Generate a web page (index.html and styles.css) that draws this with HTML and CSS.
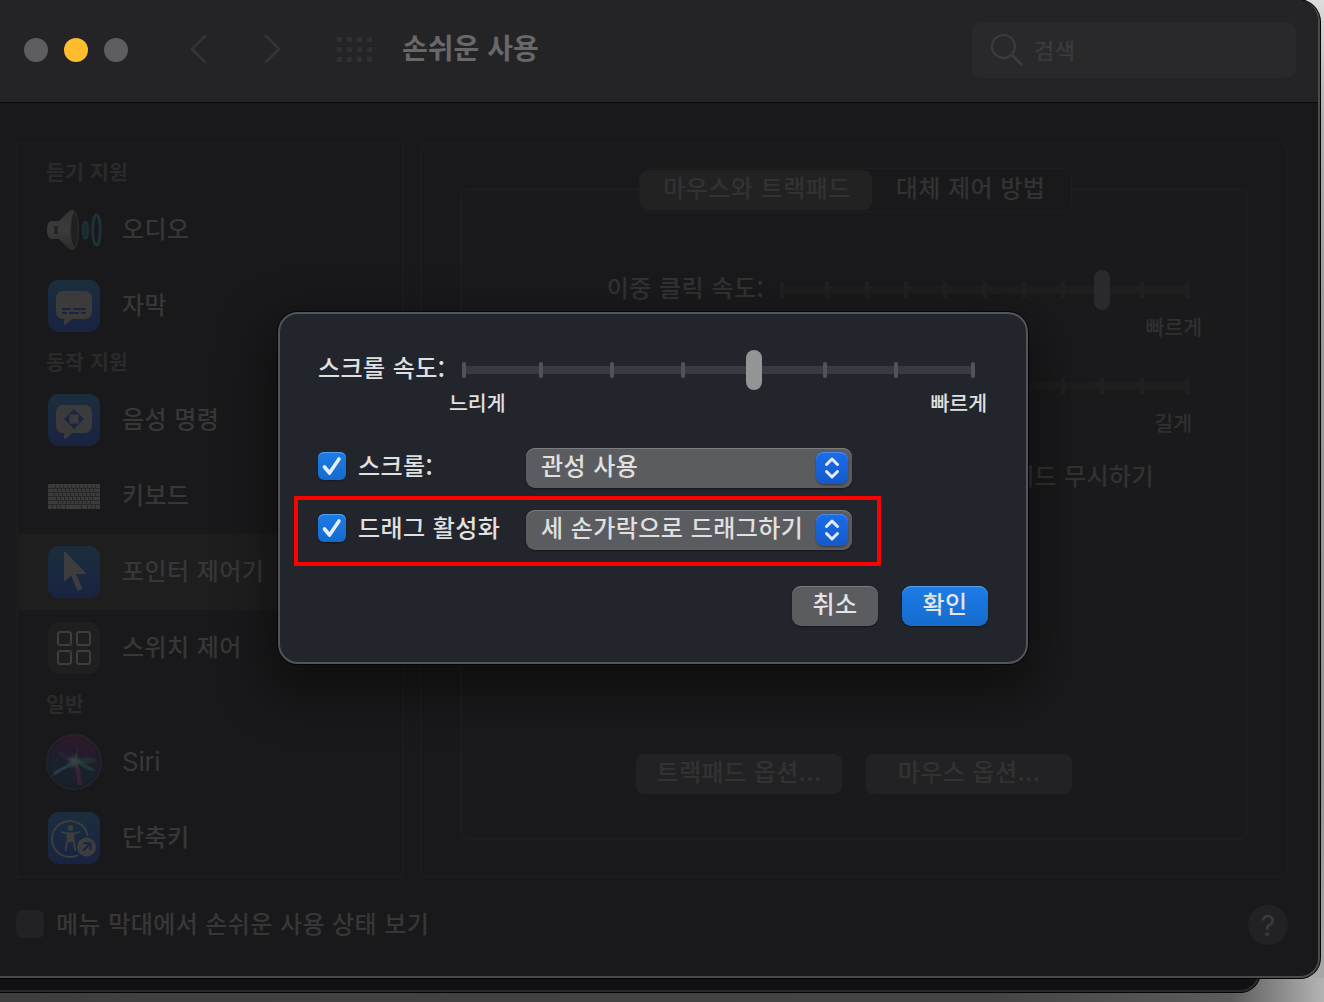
FILE: index.html
```html
<!DOCTYPE html>
<html lang="ko">
<head>
<meta charset="utf-8">
<title>손쉬운 사용</title>
<link rel="stylesheet" href="styles.css">
</head>
<body>
<div class="desktop">
  <div class="back-window"></div>
  <main class="window">
    <header class="titlebar">
      <div class="lights"><i class="light"></i><i class="light light-min"></i><i class="light"></i></div>
      <svg class="nav nav-back" width="18" height="30" viewBox="0 0 18 30"><path d="M16 2 3 15l13 13"/></svg>
      <svg class="nav nav-next" width="18" height="30" viewBox="0 0 18 30"><path d="m2 2 13 13L2 28"/></svg>
      <div class="all-grid"><i></i><i></i><i></i><i></i><i></i><i></i><i></i><i></i><i></i><i></i><i></i><i></i></div>
      <h1 class="title">손쉬운 사용</h1>
      <div class="search">
        <svg width="34" height="34" viewBox="0 0 34 34"><circle cx="14.5" cy="13.5" r="11.5"/><path d="m23 22 9 9" class="handle"/></svg>
        <span>검색</span>
      </div>
    </header>

    <div class="content">
      <nav class="sidebar">
        <h2 class="group">듣기 지원</h2>
        <div class="item">
          <svg class="icon" viewBox="0 0 56 56">
            <defs>
              <linearGradient id="metal" x1="0" y1="0" x2="0" y2="1"><stop offset="0" stop-color="#333334"/><stop offset=".5" stop-color="#3c3c3d"/><stop offset="1" stop-color="#2b2b2c"/></linearGradient>
              <linearGradient id="blue" x1="0" y1="0" x2="0" y2="1"><stop offset="0" stop-color="#1b2e3d"/><stop offset="1" stop-color="#192342"/></linearGradient>
            </defs>
            <path d="M5 19h8L23 9q5-3 7 3 3 16 0 32-2 6-7 3L13 37H5q-4-1-4-9t4-9z" fill="url(#metal)"/>
            <path d="M8 24h4v8H8z" fill="#242425"/>
            <ellipse cx="28.500" cy="28" rx="3.800" ry="17.500" fill="#202021" stroke="#303031"/>
            <ellipse cx="39.500" cy="28" rx="2.700" ry="8.500" fill="#1c2a30" stroke="#1d3038" stroke-width="2"/>
            <ellipse cx="50.500" cy="28" rx="3.800" ry="15" fill="none" stroke="#1e323a" stroke-width="3"/>
          </svg>
          <span>오디오</span>
        </div>
        <div class="item">
          <svg class="icon" viewBox="0 0 56 56">
            <rect x="2" y="2" width="52" height="52" rx="11" fill="url(#blue)"/>
            <path d="M17 13h22a7 7 0 0 1 7 7v14a7 7 0 0 1-7 7H26l-6 5.500q-2 1.200-2-1V41h-1a7 7 0 0 1-7-7V20a7 7 0 0 1 7-7z" fill="#3b3b3c"/>
            <path d="M16 31h9M27 31h13M16 35h5M23 35h10M35 35h5" stroke="#1a2640" stroke-width="2"/>
          </svg>
          <span>자막</span>
        </div>
        <h2 class="group">동작 지원</h2>
        <div class="item">
          <svg class="icon" viewBox="0 0 56 56">
            <rect x="2" y="2" width="52" height="52" rx="11" fill="url(#blue)"/>
            <path d="M17 13h22a7 7 0 0 1 7 7v14a7 7 0 0 1-7 7H26l-6 5.500q-2 1.200-2-1V41h-1a7 7 0 0 1-7-7V20a7 7 0 0 1 7-7z" fill="#3b3b3c"/>
            <path d="m28 17.500 4.500 4.500h-9zM28 36.500l4.500-4.500h-9zM18.500 27l4.500-4.500v9zM37.500 27 33 22.500v9z" fill="#1a2640" stroke="#1a2640" stroke-linejoin="round" stroke-width=".8"/>
          </svg>
          <span>음성 명령</span>
        </div>
        <div class="item">
          <svg class="icon" viewBox="0 0 56 56">
            <rect x="2" y="16" width="52" height="25" rx="1" fill="#3b3b3c"/>
            <g stroke="#282829" stroke-width="1" fill="none">
              <path d="M2 20.500h52M2 24.500h52M2 28.500h52M2 32.500h52M2 36.500h52"/>
              <path d="M9.500 17v3.500M13.500 17v3.500M17.500 17v3.500M21.500 17v3.500M25.500 17v3.500M29.500 17v3.500M33.500 17v3.500M37.500 17v3.500M41.500 17v3.500M45.500 17v3.500M49.500 17v3.500"/>
              <path d="M7.500 21v3.500M11.500 21v3.500M15.500 21v3.500M19.500 21v3.500M23.500 21v3.500M27.500 21v3.500M31.500 21v3.500M35.500 21v3.500M39.500 21v3.500M43.500 21v3.500M47.500 21v3.500"/>
              <path d="M8.500 25v3.500M12.500 25v3.500M16.500 25v3.500M20.500 25v3.500M24.500 25v3.500M28.500 25v3.500M32.500 25v3.500M36.500 25v3.500M40.500 25v3.500M44.500 25v3.500M49.500 25v3.500"/>
              <path d="M10.500 29v3.500M14.500 29v3.500M18.500 29v3.500M22.500 29v3.500M26.500 29v3.500M30.500 29v3.500M34.500 29v3.500M38.500 29v3.500M42.500 29v3.500M46.500 29v3.500"/>
              <path d="M12.500 33v3.500M16.500 33v3.500M20.500 33v3.500M24.500 33v3.500M28.500 33v3.500M32.500 33v3.500M36.500 33v3.500M40.500 33v3.500M44.500 33v3.500"/>
              <path d="M6.500 37v4M10.500 37v4M14.500 37v4M19.500 37v4M35.500 37v4M41.500 37v4M45.500 37v4M49.500 37v4"/>
            </g>
          </svg>
          <span>키보드</span>
        </div>
        <div class="item item-selected">
          <svg class="icon" viewBox="0 0 56 56">
            <rect x="2" y="2" width="52" height="52" rx="11" fill="url(#blue)"/>
            <path d="M18 9v27q0 2 1.500.700L25 31.500l6.500 15.500 5-2-6.500-15h9q1.500-.500.500-1.600L20 8.500Q18 7 18 9z" fill="#3d3d3e"/>
          </svg>
          <span>포인터 제어기</span>
        </div>
        <div class="item">
          <svg class="icon" viewBox="0 0 56 56">
            <rect x="2" y="2" width="52" height="52" rx="11" fill="#1f1f20"/>
            <g fill="none" stroke="#3e3e3f" stroke-width="2"><rect x="12" y="12" width="13" height="13" rx="2"/><rect x="31" y="12" width="13" height="13" rx="2"/><rect x="12" y="31" width="13" height="13" rx="2"/><rect x="31" y="31" width="13" height="13" rx="2"/></g>
          </svg>
          <span>스위치 제어</span>
        </div>
        <h2 class="group">일반</h2>
        <div class="item">
          <svg class="icon siri" viewBox="0 0 56 56">
            <defs>
              <linearGradient id="orb" x1=".6" y1="0" x2=".35" y2="1"><stop offset="0" stop-color="#351c2c"/><stop offset=".35" stop-color="#261d30"/><stop offset=".6" stop-color="#1a2433"/><stop offset="1" stop-color="#1a202c"/></linearGradient>
              <radialGradient id="glow"><stop offset="0" stop-color="#4a5355"/><stop offset="1" stop-color="#3a4a50" stop-opacity="0"/></radialGradient>
            </defs>
            <circle cx="28" cy="28" r="27.500" fill="url(#orb)" stroke="#232e35"/>
            <path d="M28 27Q44 20 51 26q-8 7-23 1z" fill="#22353a"/>
            <path d="M29 27q15 3 20 10-10 0-20-10z" fill="#1f4338"/>
            <path d="M28 27q7 12 8 25l-4-1z" fill="#46233a"/>
            <path d="M28 27Q17 38 5 43l4-6z" fill="#28474c"/>
            <path d="M28 27Q17 15 12 17q2 10 16 10z" fill="#2b2339"/>
            <path d="m32 13-1 12 10 4-9 1 4 14-6-12-12 3 9-7-9-5 10 2z" fill="#40494e" opacity=".5"/>
            <circle cx="28" cy="27" r="8" fill="url(#glow)"/>
            <circle cx="28" cy="28" r="24.500" fill="none" stroke="#191d27" opacity=".7"/>
          </svg>
          <span class="latin">Siri</span>
        </div>
        <div class="item">
          <svg class="icon" viewBox="0 0 56 56">
            <rect x="2" y="2" width="52" height="52" rx="11" fill="url(#blue)"/>
            <path d="M31.500 45.300A18 18 0 1 1 41.500 25" fill="none" stroke="#3d3d3e" stroke-width="2" stroke-linecap="round"/>
            <circle cx="24.500" cy="18" r="2.700" fill="#3e3e3f"/>
            <path d="m15.500 22 6 1.500v6L19.700 40M33.500 22l-6 1.500v6L29.300 40" fill="none" stroke="#3e3e3f" stroke-width="1.800" stroke-linecap="round"/>
            <path d="M21 22.500h7v9l-3.500 1-3.500-1z" fill="#3e3e3f"/>
            <circle cx="40.500" cy="37" r="9.500" fill="#3e3e3f"/>
            <path d="m37 41 7-7.500M37.500 33.200h7v7" fill="none" stroke="#1a2640" stroke-width="2"/>
          </svg>
          <span>단축키</span>
        </div>
      </nav>

      <section class="panel">
        <div class="tabs"><span class="tab tab-on">마우스와 트랙패드</span><span class="tab">대체 제어 방법</span></div>
        <div class="pane">
          <div class="row">
            <span>이중 클릭 속도<i class="colon">:</i></span>
            <svg class="dim-slider" width="410" height="40" viewBox="0 0 410 40">
              <path d="M0 20h410" stroke="#1e1e1f" stroke-width="8"/>
              <path d="M2 12v16M47 12v16M87 12v16M126 12v16M165 12v16M205 12v16M244 12v16M283 12v16M362 12v16M407 12v16" class="dim-tick"/>
              <rect x="314" y="0" width="16" height="40" rx="8" fill="#292a2b"/>
            </svg>
          </div>
          <div class="hint">빠르게</div>
          <div class="row row-delay">
            <svg class="dim-slider" width="410" height="40" viewBox="0 0 410 40">
              <path d="M0 20h410" stroke="#1e1e1f" stroke-width="8"/>
              <path d="M2 12v16M47 12v16M87 12v16M126 12v16M165 12v16M205 12v16M244 12v16M283 12v16M322 12v16M362 12v16M407 12v16" class="dim-tick"/>
            </svg>
          </div>
          <div class="hint hint-long">길게</div>
          <div class="ignore">내장 트랙패드 무시하기</div>
          <div class="options"><span>트랙패드 옵션...</span><span>마우스 옵션...</span></div>
        </div>
      </section>
    </div>

    <footer class="footer">
      <i class="dim-check"></i><span>메뉴 막대에서 손쉬운 사용 상태 보기</span><b class="help">?</b>
    </footer>
  </main>

  <section class="sheet">
    <div class="speed">
      <label>스크롤 속도<i class="colon">:</i></label>
      <svg width="513" height="40" viewBox="0 0 513 40">
        <path d="M2 20h509" stroke="#3a3b40" stroke-width="8"/>
        <path d="M2 14v12M79 14v12M150 14v12M221 14v12M363 14v12M434 14v12M511 14v12" stroke="#525358" stroke-width="4" stroke-linecap="round"/>
        <rect x="284" y="0" width="16" height="40" rx="8" fill="#939496"/>
      </svg>
    </div>
    <div class="ends"><span>느리게</span><span>빠르게</span></div>
    <div class="option">
      <svg class="check" viewBox="0 0 28 28"><path d="m6.500 15 5 6L21 7"/></svg>
      <label>스크롤<i class="colon">:</i></label>
      <div class="popup"><span>관성 사용</span><svg class="arrows" viewBox="0 0 32 32"><path d="m10.500 12.500 5.500-5.500 5.500 5.500M10.500 19.500 16 25l5.500-5.500"/></svg></div>
    </div>
    <div class="option option-drag">
      <svg class="check" viewBox="0 0 28 28"><path d="m6.500 15 5 6L21 7"/></svg>
      <label>드래그 활성화</label>
      <div class="popup"><span>세 손가락으로 드래그하기</span><svg class="arrows" viewBox="0 0 32 32"><path d="m10.500 12.500 5.500-5.500 5.500 5.500M10.500 19.500 16 25l5.500-5.500"/></svg></div>
    </div>
    <div class="actions"><button class="btn">취소</button><button class="btn btn-ok">확인</button></div>
    <div class="marker"></div>
  </section>
</div>
</body>
</html>
```
FILE: styles.css
```css
* { box-sizing: border-box; }
body { margin: 0; }
.desktop {
  position: relative;
  width: 1324px;
  height: 1002px;
  overflow: hidden;
  background: linear-gradient(90deg, #3f3f3f 0, #454545 75%, #5c5c5c 93%, #b4b4b4 100%);
  font: 500 24px/36px "Noto Sans CJK KR", sans-serif;
  letter-spacing: .42px;
  word-spacing: .2px;
  color: #373738;
  white-space: nowrap;
}
.desktop::before {
  content: "";
  position: absolute;
  inset: 0 0 24px 1300px;
  background: linear-gradient(#dcdcdc, #b0b0b0 12%, #989898 35%, #929292 80%, #a8a8a8);
}
.back-window {
  position: absolute;
  left: -20px;
  bottom: 10px;
  width: 1280px;
  height: 80px;
  background: #111113;
  border: 2px solid #2b2b2d;
  border-radius: 20px;
  box-shadow: 0 0 0 1px #050505;
}
.window {
  position: relative;
  width: 1320px;
  height: 978px;
  background: #19191b;
  border: solid #4a4a4c;
  border-width: 0 2px 2px 0;
  border-radius: 0 22px 20px 0;
  box-shadow: 0 0 0 1px #050505;
  overflow: hidden;
}
.titlebar {
  display: flex;
  align-items: center;
  height: 103px;
  padding: 0 22px 3px 24px;
  background: #242426;
  border-bottom: 1px solid #0b0b0c;
}
.lights { display: flex; gap: 16px; }
.light { width: 24px; height: 24px; border-radius: 50%; background: #5e5e60; }
.light-min { background: #ffbd2e; }
.nav { fill: none; stroke: #353537; stroke-width: 2.5; stroke-linecap: round; stroke-linejoin: round; }
.nav-back { margin: -2px 0 0 61px; }
.nav-next { margin: -2px 0 0 57px; }
.all-grid { display: grid; grid-template-columns: repeat(4, 5px); gap: 5px; margin-left: 55px; }
.all-grid i { height: 5px; border-radius: 1px; background: #303032; }
.title { margin: -5px 0 0 30px; font-size: 28px; line-height: 40px; font-weight: 700; letter-spacing: 0; color: #68686a; }
.search {
  display: flex;
  align-items: center;
  gap: 11px;
  width: 324px;
  height: 56px;
  margin-left: auto;
  padding-left: 17px;
  border-radius: 10px;
  background: #29292b;
  color: #3a3a3c;
  font-size: 22px;
}
.search span { margin-top: -2px; }
.search svg { fill: none; stroke: #3b3b3d; stroke-width: 2.2; }
.search .handle { stroke-width: 3; stroke-linecap: round; }
.content { display: flex; gap: 16px; padding: 39px 30px 0 16px; }
.sidebar { width: 388px; height: 736px; padding-top: 10px; border: 2px solid #1c1c1e; }
.group { margin: 0; padding-left: 28px; height: 38px; font-size: 20.5px; line-height: 34px; font-weight: 700; letter-spacing: .1px; color: #2a2a2b; }
.item { display: flex; align-items: center; gap: 20px; height: 76px; padding-left: 28px; }
.item-selected { background: #1e1e1f; }
.item span { margin-top: -5px; }
.item .latin { margin-top: 0; font-family: Inter, sans-serif; font-weight: 400; font-size: 26px; letter-spacing: -.3px; }
.icon { flex: none; width: 56px; height: 56px; }
.siri { opacity: .8; }
.colon { position: relative; top: 2px; font-style: normal; }
.panel { width: 868px; height: 736px; padding: 26px 38px 0; border: 2px solid #1c1c1e; border-radius: 8px; color: #323233; }
.tabs {
  position: relative;
  display: flex;
  width: 433px;
  height: 44px;
  margin: -2px auto 0 179px;
  border: 1px solid #1e1e20;
  border-radius: 10px;
  background: #19191b;
}
.tab { width: 197px; text-align: center; line-height: 36px; }
.tab-on { width: 232px; height: 40px; margin-top: 1px; padding-left: 2px; border-radius: 9px; background: #222223; line-height: 34px; }
.pane { height: 652px; margin-top: -24px; padding: 80px 56px 0 0; border: 2px solid #1d1d1f; border-radius: 8px; background: #1a1a1c; }
.row { display: flex; justify-content: flex-end; gap: 16px; height: 40px; }
.row > span { line-height: 34px; }
.row-delay { margin-top: 24px; }
.dim-tick { stroke: #202021; stroke-width: 4; }
.hint { height: 32px; margin-right: -12px; text-align: right; font-size: 20.5px; line-height: 32px; letter-spacing: 0; color: #303031; }
.hint-long { margin-right: -2px; }
.ignore { margin: 19px 36px 0 0; text-align: right; }
.options { display: flex; gap: 24px; margin: 261px 0 0 174px; }
.options span { width: 206px; height: 40px; border-radius: 8px; background: #222224; text-align: center; line-height: 34px; }
.footer { display: flex; align-items: center; gap: 12px; height: 92px; padding: 0 30px 0 16px; }
.footer span { margin-top: -3px; word-spacing: 0; }
.dim-check { width: 28px; height: 28px; border-radius: 6px; background: #222224; }
.help { width: 40px; height: 40px; margin: 2px 0 0 auto; border-radius: 50%; background: #222224; color: #3a3a3b; text-align: center; font: 400 29px/41px Inter, sans-serif; letter-spacing: 0; }

.sheet {
  position: absolute;
  left: 278px;
  top: 312px;
  width: 750px;
  height: 352px;
  padding: 36px 38px;
  border: 2px solid #525457;
  border-radius: 20px;
  background: #23252d;
  box-shadow: 0 0 0 1px #050505, 0 20px 50px 10px rgba(0, 0, 0, .42);
  color: #e0e0e1;
}
.speed { display: flex; justify-content: space-between; width: 657px; height: 40px; }
.speed label { line-height: 34px; }
.ends { display: flex; justify-content: space-between; width: 538px; margin-left: 131px; font-size: 20.5px; line-height: 24px; letter-spacing: 0; }
.option { display: flex; align-items: center; height: 40px; margin-top: 34px; }
.option-drag { margin-top: 22px; }
.option label { width: 168px; margin-top: -6px; }
.check { width: 28px; height: 28px; margin: -4px 12px 0 0; border-radius: 6px; background: linear-gradient(#1c7ce8, #156bcc); box-shadow: 0 1px 2px rgba(0, 0, 0, .4), inset 0 1px #55a0ee; }
.check path { fill: none; stroke: #e6eefa; stroke-width: 3.6; stroke-linecap: round; stroke-linejoin: round; }
.popup { display: flex; align-items: center; justify-content: space-between; width: 326px; height: 40px; padding: 0 4px 0 15px; border-radius: 9px; background: #5b5c60; box-shadow: 0 1px 2px rgba(0, 0, 0, .4), inset 0 1px #7b7c80; }
.popup span { margin-top: -6px; }
.arrows { width: 32px; height: 32px; border-radius: 8px; background: linear-gradient(#1b6de8, #1459cc); box-shadow: 0 1px 2px rgba(0, 0, 0, .4), inset 0 1px #4c8df0; }
.arrows path { fill: none; stroke: #e4ecfa; stroke-width: 3; stroke-linecap: round; stroke-linejoin: round; }
.actions { display: flex; justify-content: flex-end; gap: 24px; margin-top: 36px; }
.btn { width: 86px; height: 40px; padding: 0 0 6px; border: 0; border-radius: 9px; background: #5b5c60; box-shadow: 0 1px 2px rgba(0, 0, 0, .4), inset 0 1px #7b7c80; color: #e4e4e5; font: inherit; line-height: 34px; letter-spacing: inherit; }
.btn-ok { background: linear-gradient(#1c7ce8, #156bcc); box-shadow: 0 1px 2px rgba(0, 0, 0, .4), inset 0 1px #55a0ee; }
.marker { position: absolute; left: 14px; top: 182px; width: 587px; height: 70px; border: 4px solid #f00; border-radius: 1px; }
```
